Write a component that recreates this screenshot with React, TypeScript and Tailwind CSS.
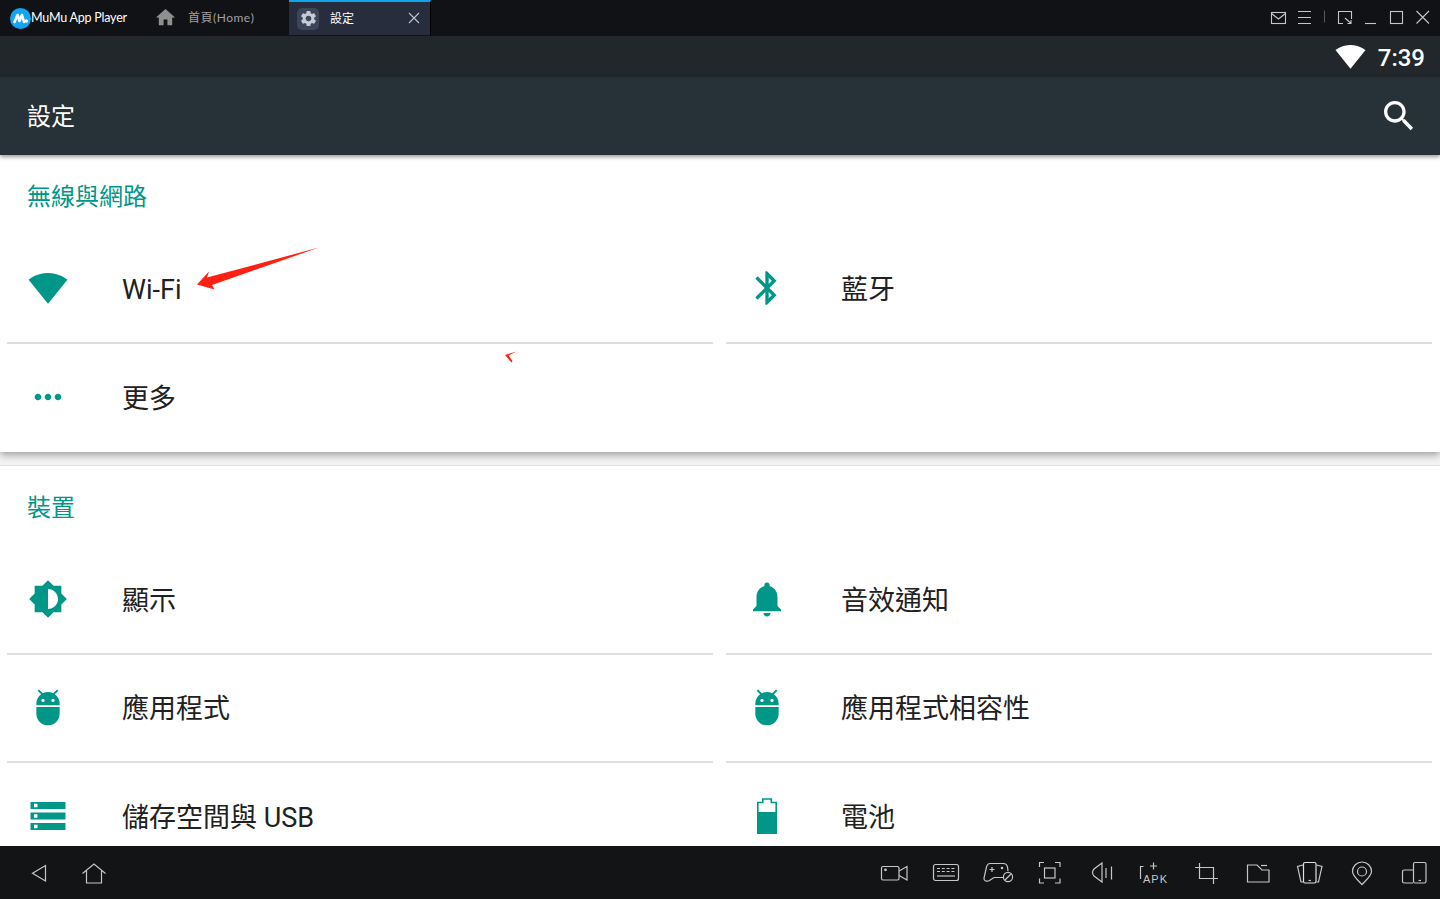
import React from "react";

const TEAL = "#009688";
const P = {
  wifi: "M12.01 21.49L23.64 7c-.45-.34-4.93-4-11.64-4C5.28 3 .81 6.66.36 7l11.63 14.49.01.01.01-.01z",
  bt: "M17.71 7.71L12 2h-1v7.59L6.41 5 5 6.41 10.59 12 5 17.59 6.41 19 11 14.41V22h1l5.71-5.71-4.3-4.29 4.3-4.29zM13 5.83l1.88 1.88L13 9.59V5.83zm1.88 10.46L13 18.17v-3.76l1.88 1.88z",
  more: "M6 10c-1.1 0-2 .9-2 2s.9 2 2 2 2-.9 2-2-.9-2-2-2zm12 0c-1.1 0-2 .9-2 2s.9 2 2 2 2-.9 2-2-.9-2-2-2zm-6 0c-1.1 0-2 .9-2 2s.9 2 2 2 2-.9 2-2-.9-2-2-2z",
  bright: "M20 15.31L23.31 12 20 8.69V4h-4.69L12 .69 8.69 4H4v4.69L.69 12 4 15.31V20h4.69L12 23.31 15.31 20H20v-4.69zM12 18V6c3.31 0 6 2.69 6 6s-2.69 6-6 6z",
  bell: "M12 22c1.1 0 2-.9 2-2h-4c0 1.1.89 2 2 2zm6-6v-5c0-3.07-1.64-5.64-4.5-6.32V4c0-.83-.67-1.5-1.5-1.5s-1.5.67-1.5 1.5v.68C7.63 5.36 6 7.92 6 11v5l-2 2v1h16v-1l-2-2z",
  adb: "M5 16c0 3.87 3.13 7 7 7s7-3.13 7-7v-4H5v4zM16.12 4.37l2.1-2.1-.82-.83-2.3 2.31C14.16 3.28 13.12 3 12 3s-2.16.28-3.09.75L6.6 1.44l-.82.83 2.1 2.1C6.14 5.64 5 7.68 5 10v1h14v-1c0-2.32-1.14-4.36-2.88-5.63zM9 9c-.55 0-1-.45-1-1s.45-1 1-1 1 .45 1 1-.45 1-1 1zm6 0c-.55 0-1-.45-1-1s.45-1 1-1 1 .45 1 1-.45 1-1 1z",
  storage: "M2 20h20v-4H2v4zm2-3h2v2H4v-2zM2 4v4h20V4H2zm4 3H4V5h2v2zm-4 7h20v-4H2v4zm2-3h2v2H4v-2z",
  gear: "M19.14 12.94c.04-.3.06-.61.06-.94 0-.32-.02-.64-.07-.94l2.03-1.58c.18-.14.23-.41.12-.61l-1.92-3.32c-.12-.22-.37-.29-.59-.22l-2.39.96c-.5-.38-1.03-.7-1.62-.94l-.36-2.54c-.04-.24-.24-.41-.48-.41h-3.84c-.24 0-.43.17-.47.41l-.36 2.54c-.59.24-1.13.57-1.62.94l-2.39-.96c-.22-.08-.47 0-.59.22L2.74 8.87c-.12.21-.08.47.12.61l2.03 1.58c-.05.3-.09.63-.09.94s.02.64.07.94l-2.03 1.58c-.18.14-.23.41-.12.61l1.92 3.32c.12.22.37.29.59.22l2.39-.96c.5.38 1.03.7 1.62.94l.36 2.54c.05.24.24.41.48.41h3.84c.24 0 .44-.17.47-.41l.36-2.54c.59-.24 1.13-.56 1.62-.94l2.39.96c.22.08.47 0 .59-.22l1.92-3.32c.12-.22.07-.47-.12-.61l-2.01-1.58zM12 15.6c-1.98 0-3.6-1.62-3.6-3.6s1.62-3.6 3.6-3.6 3.6 1.62 3.6 3.6-1.62 3.6-3.6 3.6z",
  home: "M10 20v-6h4v6h5v-8h3L12 3 2 12h3v8z",
  search: "M15.5 14h-.79l-.28-.27C15.41 12.59 16 11.11 16 9.5 16 5.91 13.09 3 9.5 3S3 5.91 3 9.5 5.91 16 9.5 16c1.61 0 3.09-.59 4.23-1.57l.27.28v.79l5 4.99L20.49 19l-4.99-5zm-6 0C7.01 14 5 11.99 5 9.5S7.01 5 9.5 5 14 7.01 14 9.5 11.99 14 9.5 14z",
};

function M({ d, size = 40, color = TEAL }: { d: string; size?: number; color?: string }) {
  return (
    <svg width={size} height={size} viewBox="0 0 24 24" fill={color}>
      <path d={d} />
    </svg>
  );
}

function Battery() {
  return (
    <svg width="40" height="40" viewBox="0 0 40 40" fill="none">
      <path d="M15.7 3H24.3V6.5H29.2V37.2H10.8V6.5H15.7Z" stroke={TEAL} strokeWidth="1.6" />
      <rect x="10" y="16" width="20" height="22" fill={TEAL} />
    </svg>
  );
}

function Row({ icon, label, noLine }: { icon: React.ReactNode; label: string; noLine?: boolean }) {
  return (
    <div className={`flex h-[108px] items-center ${noLine ? "" : "border-b-2 border-[#dedede]"}`}>
      <div className="flex w-[81px] shrink-0 justify-center pb-[2px]">{icon}</div>
      <div className="pl-[34px] pt-[2px] text-[27px] leading-none text-[#212121]">{label}</div>
    </div>
  );
}

function Header({ children }: { children: string }) {
  return <div className="flex h-[81px] items-center pl-[27px] pt-[3px] text-[24px] text-[#009688]">{children}</div>;
}

function Ico({ children, w = 52 }: { children: React.ReactNode; w?: number }) {
  return (
    <div className="flex shrink-0 justify-center" style={{ width: w }}>
      <svg width="32" height="32" viewBox="0 0 32 32" fill="none" stroke="#c6c6c6" strokeWidth="1.2">
        {children}
      </svg>
    </div>
  );
}

function Logo() {
  return (
    <svg width="21" height="21" viewBox="0 0 21 21">
      <circle cx="10.5" cy="10.5" r="10.5" fill="#12a5f0" />
      <path d="M4.5 14 L7.5 7 L9.5 13 L12 7 L14 14" fill="none" stroke="#fff" strokeWidth="2.6" strokeLinecap="round" strokeLinejoin="round" />
      <circle cx="16.5" cy="13" r="1.7" fill="#fff" />
    </svg>
  );
}

export default function App() {
  return (
    <div className="relative flex h-[899px] w-full flex-col overflow-hidden bg-[#f4f4f4] font-[Roboto,'Noto_Sans_CJK_TC',sans-serif]">
      {/* Title bar */}
      <div className="flex h-[36px] shrink-0 items-stretch bg-[#111215]">
        <div className="flex w-[156px] shrink-0 items-center pl-[10px]">
          <Logo />
          <span className="text-[12.5px] tracking-[-0.22px] text-white font-['Lato',sans-serif]">MuMu App Player</span>
        </div>
        <div className="flex w-[133px] shrink-0 items-center">
          <div className="ml-[-2px] mb-[2px] flex">
            <M d={P.home} size={23} color="#8f8f8f" />
          </div>
          <span className="ml-[11px] text-[12px] tracking-[0.5px] text-[#a0a0a0] font-['Lato','Noto_Sans_CJK_TC',sans-serif]">首頁(Home)</span>
        </div>
        <div className="flex h-[35px] w-[142px] shrink-0 items-center border-t-2 border-r border-t-[#0ea5e9] border-r-black bg-[#272d3d] pl-[8px]">
          <div className="flex h-[22px] w-[22px] items-center justify-center rounded-[5px] bg-[#3d4559]">
            <M d={P.gear} size={19} color="#c5cad4" />
          </div>
          <span className="ml-[11px] text-[12px] text-white">設定</span>
          <svg className="ml-[54px] mb-[2px]" width="12" height="12" viewBox="0 0 12 12" stroke="#c0c4cc" strokeWidth="1.1" fill="none">
            <path d="M1 1L11 11M11 1L1 11" />
          </svg>
        </div>
        <div className="flex flex-1 items-center justify-end">
          <svg width="170" height="36" viewBox="0 0 170 36" fill="none" stroke="#c6c6c6" strokeWidth="1.1">
            <rect x="1.5" y="12.5" width="14" height="11" />
            <path d="M1.5 13.5L8.5 19L15.5 13.5" />
            <path d="M28 11.5H41M28 17.5H41M28 23.5H41" />
            <path d="M54.5 10.5V22.5" stroke="#555" />
            <path d="M77 11.5H68.5V23.5H73M81.5 19V11.5H77M75 18L81 23.5M81 20V23.5H77.5" />
            <path d="M95 23.5H106" />
            <rect x="120.5" y="11.5" width="12" height="12" />
            <path d="M146.5 11L159 23.5M159 11L146.5 23.5" />
          </svg>
        </div>
      </div>

      {/* Status bar */}
      <div className="flex h-[41px] shrink-0 items-center justify-end bg-[#21272b] pr-[15px]">
        <div className="mr-[1px] flex">
          <M d={P.wifi} size={31} color="#fff" />
        </div>
        <span className="ml-[11px] pt-[2px] text-[24px] font-medium leading-none text-white">7:39</span>
      </div>

      {/* Toolbar */}
      <div className="relative z-10 flex h-[78px] shrink-0 items-center justify-between bg-[#263238] pl-[27px] pr-[21px] shadow-[0_2px_4px_rgba(0,0,0,0.4)]">
        <span className="pt-[2px] text-[24px] text-white">設定</span>
        <M d={P.search} color="#fff" />
      </div>

      {/* Content */}
      <div className="min-h-0 flex-1 overflow-hidden">
        <div className="h-[297px] bg-white shadow-[0_3px_8px_rgba(0,0,0,0.35)]">
          <Header>無線與網路</Header>
          <div className="grid grid-cols-[706px_706px] gap-x-[13px] pl-[7px]">
            <Row icon={<M d={P.wifi} />} label="Wi-Fi" />
            <Row icon={<M d={P.bt} />} label="藍牙" />
            <Row icon={<M d={P.more} />} label="更多" noLine />
            <div className="h-[108px]" />
          </div>
        </div>
        <div className="mt-[13px] border-t border-[#e4e4e4] bg-white">
          <Header>裝置</Header>
          <div className="grid grid-cols-[706px_706px] gap-x-[13px] pl-[7px]">
            <Row icon={<M d={P.bright} />} label="顯示" />
            <Row icon={<M d={P.bell} size={42} />} label="音效通知" />
            <Row icon={<M d={P.adb} />} label="應用程式" />
            <Row icon={<M d={P.adb} />} label="應用程式相容性" />
            <Row icon={<M d={P.storage} size={42} />} label="儲存空間與 USB" noLine />
            <Row icon={<Battery />} label="電池" noLine />
          </div>
        </div>
      </div>

      {/* Bottom bar */}
      <div className="flex h-[53px] shrink-0 items-center bg-[#131416]">
        <Ico w={78}>
          <path d="M22.5 8.5V24L9.5 16.2Z" />
        </Ico>
        <Ico w={32}>
          <path d="M4.5 16.5L16 7L27.5 16.5M8.5 14V26H23.5V14" />
        </Ico>
        <div className="flex-1" />
        <Ico>
          <rect x="3.5" y="9.5" width="17.5" height="13.5" rx="1.5" />
          <circle cx="7.5" cy="12.8" r="0.8" fill="#c6c6c6" />
          <path d="M21 14L29 9.5V23L21 18.5" />
        </Ico>
        <Ico>
          <rect x="3.5" y="7.5" width="25" height="16" rx="2" />
          <path d="M7 11.5H25M7 14.5H25" strokeDasharray="3 1.8" />
          <path d="M7 19H25" />
        </Ico>
        <Ico>
          <path d="M21 20.5H12L7.5 23.5C5 25 1.5 24 2 21L4.5 10C5 8 6 6.5 8 6.5H21.5C24 6.5 25 8 25.5 10L26 14" />
          <path d="M7.5 12.5H12.5M10 10V15" />
          <circle cx="20" cy="11" r="0.7" fill="#c6c6c6" />
          <circle cx="26" cy="20" r="4.6" />
          <path d="M23 23L29 17" />
        </Ico>
        <Ico>
          <rect x="10.5" y="11" width="10.5" height="10" />
          <path d="M5.5 10V5.5H10M21 5.5H26V10M26 21.5V26H21M10 26H5.5V21.5" />
        </Ico>
        <Ico>
          <path d="M16 6L8 12Q5 15.5 8 19L16 25Z" />
          <path d="M20 11V21M25.5 9.5V22.5" />
        </Ico>
        <Ico>
          <path d="M5.5 9.5H2.5V22" />
          <path d="M15.5 5.5V12.5M12 9H19" />
          <text x="5" y="26" fontSize="11" fill="#c6c6c6" stroke="none" fontFamily="Liberation Sans" textLength="24">APK</text>
        </Ico>
        <Ico>
          <path d="M9.5 6V21.5H28M5 10.5H23.5V27" />
        </Ico>
        <Ico>
          <path d="M5.5 8H15L20 13H27V25H5.5Z" />
          <path d="M19 8.5H25" />
        </Ico>
        <Ico>
          <rect x="9.5" y="5.5" width="12.5" height="20.5" rx="1.5" stroke="#e0e0e0" />
          <path d="M9 8L3.5 9.5L7 25H9M22.5 8L28 9.5L24.5 25H22.5" />
          <path d="M14.5 23.5H17" />
        </Ico>
        <Ico>
          <path d="M16 27.5C12 23 6.5 19 6.5 14.5A9.5 9.5 0 0 1 25.5 14.5C25.5 19 20 23 16 27.5Z" />
          <circle cx="16" cy="14.5" r="4.5" />
        </Ico>
        <Ico>
          <rect x="15.5" y="5.5" width="12.5" height="20.5" rx="1.5" />
          <path d="M15 13H6.5Q4.5 13 4.5 15V24.5Q4.5 26 6.5 26H15" />
          <path d="M20.5 23.5H23" />
        </Ico>
      </div>

      {/* Red annotations over the screenshot */}
      <svg className="absolute left-0 top-0" width="540" height="380" viewBox="0 0 540 380">
        <path d="M197 284.5L209 271.5L207 277.5L319 247.5L212 285L214.5 289.5Z" fill="#ff2012" />
        <path d="M516.5 351.5L505 355L511.5 362.5L512.5 361L508.5 355.5Z" fill="#ff2012" />
      </svg>
    </div>
  );
}
